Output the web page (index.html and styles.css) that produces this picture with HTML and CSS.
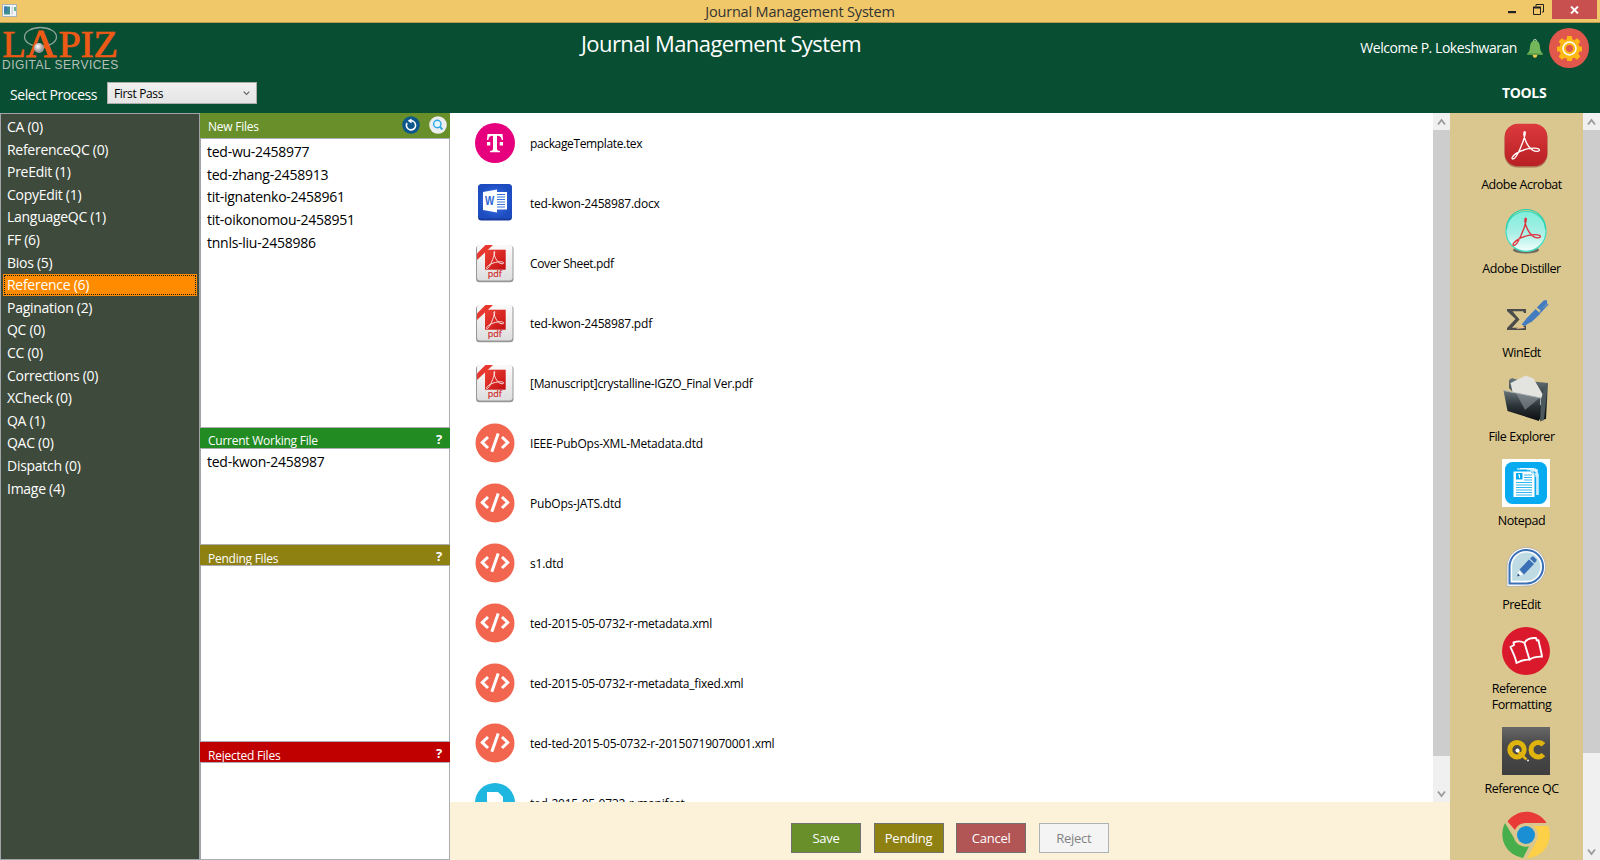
FILE: index.html
```html
<!DOCTYPE html>
<html lang="en">
<head>
<meta charset="utf-8">
<title>Journal Management System</title>
<link rel="stylesheet" href="styles.css">
</head>
<body>
<svg class="defs" width="0" height="0" aria-hidden="true">
  <defs>
    <linearGradient id="gRed" x1="0" y1="0" x2="0" y2="1"><stop offset="0" stop-color="#dc3a3c"/><stop offset="1" stop-color="#b81f24"/></linearGradient>
    <linearGradient id="gPdf" x1="0" y1="0" x2="1" y2="1"><stop offset="0" stop-color="#ee4136"/><stop offset="1" stop-color="#c30f12"/></linearGradient>
    <linearGradient id="gPaper" x1="0" y1="0" x2="0" y2="1"><stop offset="0" stop-color="#fafafa"/><stop offset="1" stop-color="#dedede"/></linearGradient>
    <radialGradient id="gWord"><stop offset="0" stop-color="#3f7cf0"/><stop offset="1" stop-color="#1d4cc0"/></radialGradient>
    <linearGradient id="gAqua" x1="0" y1="0" x2="0" y2="1"><stop offset="0" stop-color="#7feedb"/><stop offset=".55" stop-color="#a9f0e6"/><stop offset="1" stop-color="#f4fffd"/></linearGradient>
    <linearGradient id="gDark" x1="0" y1="0" x2="0" y2="1"><stop offset="0" stop-color="#68767b"/><stop offset=".5" stop-color="#2c3438"/><stop offset="1" stop-color="#0b0d0e"/></linearGradient>
    <linearGradient id="gQc" x1="0" y1="0" x2="0" y2="1"><stop offset="0" stop-color="#686868"/><stop offset=".35" stop-color="#4b4b4b"/><stop offset="1" stop-color="#3e3e3e"/></linearGradient>
    <radialGradient id="gBall" cx=".4" cy=".35"><stop offset="0" stop-color="#fff"/><stop offset="1" stop-color="#9b9b9b"/></radialGradient>
  </defs>
  <symbol id="acro" viewBox="0 0 30 30">
    <path d="M13.600 2.200c-1.200.2-.6 4.600.6 7.600 1.500 4 4.200 8.200 7.600 10.400 2.500 1.500 6 1.300 6.200-.2.300-1.600-4.200-2.400-8.800-1.700-5 .7-10.800 2.700-14.600 5.500-3 2.200-3.700 4.400-2.600 4.700 1.900.5 5-4.600 7.200-9.600 2.200-5 4.100-10.600 4.800-13.800.4-1.800.5-3-.4-2.900z" fill="none" stroke="currentColor" stroke-width="1.300" stroke-linejoin="round"/>
  </symbol>
  <symbol id="i-code" viewBox="0 0 40 40">
    <circle cx="20" cy="20" r="19.500" fill="#f26650"/>
    <path d="M13 14L7.300 19.500l5.700 5.500M27 14l5.700 5.500L27 25M23.200 10.500l-6.400 18.200" fill="none" stroke="#fff" stroke-width="3"/>
  </symbol>
  <symbol id="i-pdf" viewBox="0 0 40 40">
    <rect x="1" y="2.500" width="37.500" height="36.700" rx="3.500" fill="#969696"/>
    <rect x="2" y="2" width="35.500" height="35.500" rx="3" fill="url(#gPaper)"/>
    <rect x="10" y="6.700" width="20.700" height="20" fill="url(#gPdf)"/>
    <path d="M2 10.500L10.500 2H18L2 17z" fill="#e8372f"/>
    <use href="#acro" x="10.500" y="7" width="19.500" height="19.500" color="#fff"/>
    <text x="12.800" y="34" class="pdf-word">pdf</text>
  </symbol>
  <symbol id="i-gear" viewBox="0 0 24 24">
    <path d="M9.800 0h4.400l.5 3.200 1.900.8 2.700-1.900 3.100 3.100-1.900 2.600.8 2 3.100.5v4.200l-3.100.5-.8 2 1.900 2.600-3.100 3.100-2.700-1.900-1.900.8-.5 3H9.800l-.5-3-1.900-.8-2.700 1.900-3.100-3.100 1.900-2.600-.8-2-3.100-.5v-4.200l3.100-.5.800-2-1.900-2.600 3.100-3.100L7.400 4l1.900-.8z" fill="#fdb813"/>
    <circle cx="12" cy="12" r="6.200" fill="none" stroke="#fff" stroke-width="1.500"/>
    <circle cx="12" cy="12" r="3.300" fill="#e2574c"/>
  </symbol>
</svg>

<div class="window">
  <div class="titlebar">
    <svg class="app-icon" width="15" height="13" viewBox="0 0 15 13"><rect x=".5" y=".5" width="14" height="12" fill="#f4f6f8" stroke="#a9b3bd"/><rect x="2" y="2.500" width="6" height="8" fill="#3f8f8f"/><rect x="2" y="2.500" width="3" height="5" fill="#3b79b5"/><rect x="9.500" y="2.500" width="1.500" height="8" fill="#cfd6dc"/><rect x="12" y="3" width="2" height="4" fill="#6bb58c"/></svg>
    <div class="title">Journal Management System</div>
    <div class="win-buttons">
      <svg class="win-min" width="8" height="3"><rect width="8" height="2.200" fill="#222"/></svg>
      <svg class="win-max" width="11" height="11"><path d="M3 2.500V.5h7.500V8H9" fill="none" stroke="#222"/><path d="M.5 3.500h7v7h-7z" fill="none" stroke="#222"/><path d="M0 3.500h8" stroke="#222" stroke-width="2"/></svg>
      <div class="win-close"><svg width="9" height="8" viewBox="0 0 9 8"><path d="M1 .5l7 7M8 .5l-7 7" stroke="#fff" stroke-width="1.900"/></svg></div>
    </div>
  </div>

  <header class="header">
    <svg class="logo" width="122" height="48" viewBox="0 0 122 48">
      <ellipse cx="40.500" cy="14" rx="16" ry="9.500" fill="none" stroke="#8fa39a" stroke-width="1.300"/>
      <text x="2.500" y="33.500" class="logo-big" textLength="23" lengthAdjust="spacingAndGlyphs">L</text>
      <text x="26" y="33.500" class="logo-a" textLength="30" lengthAdjust="spacingAndGlyphs">A</text>
      <text x="58.500" y="33.500" class="logo-big" textLength="59" lengthAdjust="spacingAndGlyphs">PIZ</text>
      <circle cx="39" cy="25" r="5" fill="url(#gBall)"/>
      <text x="2" y="45.500" class="logo-small" textLength="116" lengthAdjust="spacing">DIGITAL SERVICES</text>
    </svg>
    <h1 class="app-title">Journal Management System</h1>
    <div class="user">
      <span class="welcome">Welcome P. Lokeshwaran</span>
      <svg class="bell" width="16" height="19" viewBox="0 0 16 19"><circle cx="8" cy="2" r="1.600" fill="none" stroke="#b9c2c8"/><circle cx="8" cy="16.500" r="2.200" fill="#efc84a"/><path d="M8 1.500c3 0 4.700 2.600 5 6.500.3 3.700.8 5 2.600 6.300v1.400H.4v-1.400C2.200 13 2.700 11.700 3 8c.3-3.900 2-6.500 5-6.500z" fill="#74b75a"/><path d="M.4 14.300h15.200v1.400H.4z" fill="#5b9c44"/></svg>
      <div class="gear"><svg width="25" height="25"><use href="#i-gear"/></svg></div>
    </div>
    <label class="process-label">Select Process</label>
    <div class="select"><span>First Pass</span><svg width="7" height="5" viewBox="0 0 7 5"><path d="M.7.7l2.800 2.800L6.300.7" fill="none" stroke="#666" stroke-width="1.200"/></svg></div>
    <div class="tools-title">TOOLS</div>
  </header>

  <main class="main">
    <ul class="stages">
      <li>CA (0)</li><li>ReferenceQC (0)</li><li>PreEdit (1)</li><li>CopyEdit (1)</li><li>LanguageQC (1)</li><li>FF (6)</li><li>Bios (5)</li><li class="selected">Reference (6)</li><li>Pagination (2)</li><li>QC (0)</li><li>CC (0)</li><li>Corrections (0)</li><li>XCheck (0)</li><li>QA (1)</li><li>QAC (0)</li><li>Dispatch (0)</li><li>Image (4)</li>
    </ul>

    <section class="queues">
      <div class="q-head new"><span>New Files</span>
        <svg class="q-refresh" width="18" height="18" viewBox="0 0 18 18"><circle cx="9" cy="9" r="8.800" fill="#0b578c"/><path d="M8 4.800A4.600 4.600 0 1 1 5 7" fill="none" stroke="#fff" stroke-width="1.600"/><path d="M9.500 2.500v5L5.700 4.700z" fill="#fff"/></svg>
        <svg width="18" height="18" viewBox="0 0 18 18"><circle cx="9" cy="9" r="8.800" fill="#eceef0"/><circle cx="8.300" cy="8" r="3.700" fill="#e4f6ff" stroke="#2ba6e0" stroke-width="1.400"/><path d="M10.800 10.800l2.600 2.600" stroke="#2ba6e0" stroke-width="2"/></svg>
      </div>
      <ul class="q-list q-new"><li>ted-wu-2458977</li><li>ted-zhang-2458913</li><li>tit-ignatenko-2458961</li><li>tit-oikonomou-2458951</li><li>tnnls-liu-2458986</li></ul>
      <div class="q-head current"><span>Current Working File</span><b>?</b></div>
      <ul class="q-list q-current"><li>ted-kwon-2458987</li></ul>
      <div class="q-head pending"><span>Pending Files</span><b>?</b></div>
      <ul class="q-list q-pending"></ul>
      <div class="q-head rejected"><span>Rejected Files</span><b>?</b></div>
      <ul class="q-list q-rejected"></ul>
    </section>

    <section class="work">
      <div class="files-pane">
        <ul class="files">
          <li class="plain"><svg width="40" height="40" viewBox="0 0 40 40"><circle cx="20" cy="20" r="20" fill="#e6007e"/><path d="M12.500 11h15l.5 6h-1.300c-.4-3-1.700-4.300-4.700-4.300v12.600c0 2 .7 2.500 3 2.700v1.200H15V28c2.300-.2 3-.7 3-2.700V12.700c-3 0-4.300 1.300-4.700 4.300H12zM12 19h3.300v3.400H12zM24.700 19H28v3.400h-3.300z" fill="#fff"/></svg><span>packageTemplate.tex</span></li>
          <li><svg width="40" height="40" viewBox="0 0 40 40"><rect x="3" y="1.500" width="34" height="36" rx="3.500" fill="#173a9c"/><rect x="3" y="1" width="34" height="34.500" rx="3.500" fill="url(#gWord)"/><path d="M20 9h12v17.500H20z" fill="#fff"/><path d="M22 11.500h8M22 14h8M22 16.500h8M22 19h8M22 21.500h8M22 24h8" stroke="#3b74dc" stroke-width="1.100"/><path d="M8 9l14-2.500v23L8 27z" fill="#fff"/><text x="10" y="21.800" class="word-w" textLength="9" lengthAdjust="spacingAndGlyphs">W</text></svg><span>ted-kwon-2458987.docx</span></li>
          <li class="plain"><svg width="40" height="40"><use href="#i-pdf"/></svg><span>Cover Sheet.pdf</span></li>
          <li><svg width="40" height="40"><use href="#i-pdf"/></svg><span>ted-kwon-2458987.pdf</span></li>
          <li class="long"><svg width="40" height="40"><use href="#i-pdf"/></svg><span>[Manuscript]crystalline-IGZO_Final Ver.pdf</span></li>
          <li><svg width="40" height="40"><use href="#i-code"/></svg><span>IEEE-PubOps-XML-Metadata.dtd</span></li>
          <li><svg width="40" height="40"><use href="#i-code"/></svg><span>PubOps-JATS.dtd</span></li>
          <li><svg width="40" height="40"><use href="#i-code"/></svg><span>s1.dtd</span></li>
          <li><svg width="40" height="40"><use href="#i-code"/></svg><span>ted-2015-05-0732-r-metadata.xml</span></li>
          <li><svg width="40" height="40"><use href="#i-code"/></svg><span>ted-2015-05-0732-r-metadata_fixed.xml</span></li>
          <li><svg width="40" height="40"><use href="#i-code"/></svg><span>ted-ted-2015-05-0732-r-20150719070001.xml</span></li>
          <li><svg width="40" height="40" viewBox="0 0 40 40"><circle cx="20" cy="20" r="20" fill="#1fb6e0"/><path d="M12 9h11l5 5v17H12z" fill="#fff"/></svg><span>ted-2015-05-0732-r-manifest</span></li>
        </ul>
        <div class="scroll"><svg width="17" height="17"><path d="M5 11.500l3.500-4.500 3.500 4.500" class="arrow"/></svg><div class="thumb thumb-files"></div><svg width="17" height="17"><path d="M5 6.500L8.500 11 12 6.500" class="arrow"/></svg></div>
      </div>
      <div class="actions"><button class="save">Save</button><button class="pend">Pending</button><button class="cancel">Cancel</button><button class="reject" disabled>Reject</button></div>
    </section>

    <aside class="tools">
      <div class="tool-list">
        <div class="tool"><svg width="48" height="48" viewBox="0 0 48 48"><rect x="2.500" y="2" width="43" height="42.500" rx="13" fill="#8c3a2c" opacity=".6"/><rect x="2.700" y="0.700" width="42.600" height="42.300" rx="13" fill="url(#gRed)"/><use href="#acro" x="8.500" y="6.500" width="31" height="31" color="#fff"/></svg><span>Adobe Acrobat</span></div>
        <div class="tool"><svg width="48" height="48" viewBox="0 -1 48 48"><ellipse cx="24" cy="42" rx="13" ry="3.500" fill="#555" opacity=".8"/><circle cx="24" cy="23.300" r="20" fill="url(#gAqua)" stroke="#45dcc0" stroke-width="1.300"/><path d="M4.500 21a19.500 19.500 0 0 1 39 0" fill="none" stroke="#25d2ae" stroke-width="1.200"/><use href="#acro" x="9.500" y="8" width="31" height="31" color="#e0313b"/></svg><span>Adobe Distiller</span></div>
        <div class="tool"><svg width="48" height="48" viewBox="0 0 48 48"><path d="M5 18h19v4h-2l-1-1.800H10.500l7 8.300-7.500 8.300H20l2-2.300h2V39H5v-2l8.500-9L5 20z" fill="#4c4c4c"/><path d="M14 38l6-4 3 3z" fill="#efc283"/><path d="M19.500 33.500l6-7 4 4-7 4.500z" fill="#447cc0"/><path d="M24.500 27.500l9-9.500 5 4.500-9.500 9z" fill="#447cc0"/><path d="M34.800 16.500L42 9.300h3v3l-6 7.500z" fill="#447cc0"/><path d="M38 21.500l8-8.500" stroke="#447cc0" stroke-width="1.500"/></svg><span>WinEdt</span></div>
        <div class="tool"><svg width="48" height="48" viewBox="0 0 48 48"><path d="M7 13V5l3-2 6 2 30 3-2 36-6 1z" fill="url(#gDark)"/><path d="M8.500 8L24 .5l7.500 3L44 25 30 38 12 24z" fill="#e3e3df"/><path d="M1.500 15.500l37 7.500-1.500 23L5.500 36z" fill="url(#gDark)"/><path d="M1.500 15.500l37 7.500" stroke="#aab3b6"/><path d="M14 18l23.500 5L23 35z" fill="#8f989b" opacity=".6"/><path d="M39 24l4.500-14 2-1.500L42 45l-4 1.500z" fill="#4d585d"/></svg><span>File Explorer</span></div>
        <div class="tool"><svg width="48" height="48" viewBox="0 0 48 48"><path d="M0 0h48v48H0z" fill="#fff"/><rect x="3" y="3" width="42" height="42" rx="7.500" fill="#08aaf0"/><path d="M15 10h16l5 5v21M18 9.500h14" fill="none" stroke="#fff" stroke-width="1.200"/><path d="M29 11l6 0v25M25 10.500h7" fill="none" stroke="#d5f1ff" stroke-width="1.600"/><path d="M11.500 12.500h17l4 4V38h-21z" fill="#fff"/><path d="M14 14h6.500v6.500H14z" fill="#08aaf0"/><path d="M16 15.500h2v3.500h-1v-2.500h-1z" fill="#fff"/><path d="M22 16h8M22 18.500h8M22 21h8M14 23.500h16M14 26h16M14 28.500h16M14 31h16M14 33.500h16M14 36h16" stroke="#32b6ef" stroke-width="1"/><path d="M28 12h3v3h3v3M31 10h3v3" fill="none" stroke="#fff"/></svg><span>Notepad</span></div>
        <div class="tool"><svg width="48" height="48" viewBox="0 1 48 48"><path d="M5 44.500V24A19.300 19.300 0 1 1 24 44z" fill="#fff" stroke="#aaa" stroke-width=".8"/><path d="M7.500 41.500V24A16.800 16.800 0 1 1 24 41.500z" fill="#bfdbe4" stroke="#3b70b7" stroke-width="2"/><path d="M9.500 39.500V24A14.800 14.800 0 1 1 24 39.500z" fill="none" stroke="#fff" stroke-width="1.300"/><path d="M15 34.500l2-6 4 4z" fill="#fff"/><path d="M15 34.500l1-3 2 2z" fill="#244d86"/><path d="M17.500 27.500l9.500-10 5 4.500-10 10.500z" fill="#3b70b7"/><path d="M28 16.500l2-2h1.500l3 3V19l-2 2z" fill="#3b70b7"/></svg><span>PreEdit</span></div>
        <div class="tool"><svg width="48" height="48" viewBox="0 0 48 48"><circle cx="24" cy="24" r="24" fill="#da1a2c"/><path d="M14.500 36c-1-6-4-11-6-16l3.500-2-.5-2.500c4-1.500 8-1.500 11 .5 1.500-3.500 6-5.200 11.500-5l.8 2.500 1.700-.3c.8 5.500 3 11 3.500 16.500-5-.2-9 .5-12.500 3-4-.4-8 .8-13 3.300zM22.500 16l5 16.500" fill="none" stroke="#fff" stroke-width="1.900" stroke-linejoin="round"/></svg><span>Reference<br>Formatting</span></div>
        <div class="tool"><svg width="48" height="48" viewBox="0 0 48 48"><path d="M0 0h48v48H0z" fill="url(#gQc)"/><circle cx="15" cy="22.700" r="7.200" fill="none" stroke="#dfb40e" stroke-width="5"/><path d="M41.500 17.800a7.200 7.200 0 1 0 0 9.800" fill="none" stroke="#dfb40e" stroke-width="5"/><path d="M13 22l11 10" stroke="#444" stroke-width="1.600"/><path d="M16 24.500l8.500 8" stroke="#dfb40e" stroke-width="2.500"/><circle cx="15.500" cy="23.500" r="2" fill="#fff"/><circle cx="26" cy="33.500" r=".9" fill="#fff"/></svg><span>Reference QC</span></div>
        <div class="tool"><svg width="48" height="48" viewBox="0 1 48 48"><path d="M5.500 11.500A23.500 23.500 0 0 1 44.500 13H24.500A12 12 0 0 0 13 20z" fill="#e83a36"/><path d="M3 13A24 24 0 0 0 21 48l6-11.500C18 37.500 13.500 33 12 28z" fill="#46ae4a"/><path d="M31.500 16H46.300A24 24 0 0 1 25 48.500L34.500 31c3-6 .5-12-3-15z" fill="#fdd048"/><circle cx="24" cy="25" r="9" fill="#1a8fd3"/></svg></div>
      </div>
      <div class="scroll"><svg width="17" height="17"><path d="M5 11.500l3.500-4.500 3.500 4.500" class="arrow"/></svg><div class="thumb thumb-tools"></div><svg width="17" height="17"><path d="M5 6.500L8.500 11 12 6.500" class="arrow"/></svg></div>
    </aside>
  </main>
</div>
</body>
</html>
```

FILE: styles.css
```css
* { box-sizing: border-box; }
body { margin: 0; font-family: "Open Sans", "Noto Sans", sans-serif; font-size: 12px; letter-spacing: -0.35px; color: #000; }
ul { list-style: none; margin: 0; padding: 0; }
svg { display: block; flex: none; }
.defs { position: absolute; }
.window { width: 1600px; height: 860px; overflow: hidden; display: flex; flex-direction: column; }

.titlebar { height: 23px; flex: none; background: #f0c869; border-bottom: 1px solid #b99a50; display: grid; grid-template-columns: 1fr auto 1fr; align-items: start; }
.app-icon { margin: 4px 0 0 2px; }
.title { font-size: 14.5px; line-height: 23px; color: #333; letter-spacing: -0.18px; white-space: nowrap; }
.win-buttons { display: flex; justify-content: flex-end; padding-right: 3px; }
.win-min { margin: 11px 17px 0 0; }
.win-max { margin: 4px 8px 0 0; }
.win-close { width: 45px; height: 19px; background: #c8504f; display: flex; align-items: center; justify-content: center; }

.header { height: 90px; flex: none; background: #074e33; color: #fff; display: grid; grid-template-columns: 107px 343px 1fr 250px; grid-template-rows: 50px 40px; }
.logo { grid-column: 1 / 3; grid-row: 1; overflow: visible; }
.app-title { grid-column: 3; grid-row: 1; margin: 0 0 0 131px; font-weight: 400; font-size: 22px; line-height: 40px; letter-spacing: -0.58px; white-space: nowrap; }
.user { grid-column: 4; grid-row: 1; display: flex; justify-content: flex-end; padding: 5px 11px 0 0; height: 45px; align-items: center; }
.welcome { font-size: 14px; letter-spacing: -0.45px; white-space: nowrap; margin-top: -2px; }
.bell { margin: 0 6px 0 10px; }
.gear { width: 40px; height: 40px; border-radius: 50%; background: #e2574c; display: flex; align-items: center; justify-content: center; }
.process-label { grid-column: 1; grid-row: 2; padding-left: 10px; font-size: 14px; line-height: 43px; letter-spacing: -0.4px; white-space: nowrap; }
.select { grid-column: 2; grid-row: 2; width: 150px; height: 22px; margin-top: 9px; padding: 0 6px; display: flex; align-items: center; justify-content: space-between; background: linear-gradient(#f0f0f0, #e5e5e5); border: 1px solid #acacac; color: #000; }
.tools-title { grid-column: 4; grid-row: 2; padding-left: 152px; font-size: 14px; line-height: 40px; font-weight: 700; }

.main { flex: 1; display: grid; grid-template-columns: 200px 250px 1000px 150px; min-height: 0; }
.stages { background: #3e4a3c; border: 1px solid #a0a4a8; padding: 2px; color: #fff; font-size: 14px; letter-spacing: -0.28px; }
.stages li { height: 21.600px; margin-bottom: 1px; padding-left: 4px; line-height: 21px; white-space: nowrap; }
.stages .selected { background: #ff8c00; outline: 1px dotted #222; outline-offset: -2px; }

.queues { display: flex; flex-direction: column; }
.q-head { height: 20px; flex: none; padding: 0 8px; display: flex; justify-content: space-between; color: #fff; line-height: 26px; letter-spacing: -0.25px; overflow: hidden; }
.q-head b { font-size: 13px; line-height: 22px; }
.q-head.new { height: 25px; padding: 3px 3.500px 0 8px; background: #688f2a; line-height: 22px; }
.q-refresh { margin: 0 9px 0 auto; }
.current { background: #228b22; }
.q-head.pending, .q-head.rejected { line-height: 28px; }
.q-head.pending b { line-height: 23px; }
.q-head.rejected b { line-height: 22px; }
.pending { background: #8f8012; }
.rejected { background: #c00000; }
.q-list { background: #fff; border: 1px solid #abadb3; border-left-color: #a0a4a8; padding: 2px 6px; font-size: 14px; letter-spacing: -0.26px; }
.q-list li { line-height: 22.700px; white-space: nowrap; }
.q-new { height: 290px; }
.q-current { height: 97px; }
.q-pending { height: 177px; }
.q-rejected { height: 98px; }

.work { display: flex; flex-direction: column; min-height: 0; }
.files-pane { height: 689px; display: flex; background: #fff; overflow: hidden; }
.files { flex: 1; padding-left: 25px; }
.files li { height: 60px; display: flex; align-items: center; gap: 15px; white-space: nowrap; letter-spacing: -0.21px; }
.files .plain { letter-spacing: -0.36px; }
.files .long { letter-spacing: -0.3px; }
.pdf-word { font: 9px "Open Sans", sans-serif; fill: #cf2a28; stroke: #cf2a28; stroke-width: 0.2px; letter-spacing: 0; }
.word-w { font: bold 12px "Liberation Sans", sans-serif; fill: #2e66d6; }
.actions { height: 58px; background: #fbf2d9; display: flex; padding: 21px 0 0 341px; gap: 12.600px; }
.actions button { width: 70px; height: 30px; padding: 0; border: 1px solid #707070; color: #fff; font: 13px "Open Sans", sans-serif; letter-spacing: -0.25px; }
.actions .save { background: #688f2a; }
.actions .pend { background: #8f8012; }
.actions .cancel { background: #b15555; }
.actions .reject { background: #f4f4f4; border-color: #adb2b5; color: #838383; }

.scroll { width: 17px; flex: none; background: #f0f0f0; display: flex; flex-direction: column; }
.scroll svg:last-child { margin-top: auto; }
.thumb { background: #cdcdcd; }
.thumb-files { height: 626px; }
.thumb-tools { height: 623px; }
.arrow { fill: none; stroke: #9a9a9a; stroke-width: 1.800; }

.tools { display: flex; background: #dac78f; overflow: hidden; min-height: 0; height: 747px; }
.tool-list { width: 133px; padding: 10px 0 0 10px; display: flex; flex-direction: column; align-items: center; }
.tool { flex: none; display: flex; flex-direction: column; align-items: center; padding-bottom: 14px; font-size: 12.500px; line-height: 16px; letter-spacing: -0.45px; }
.tool svg { margin: 0 0 6px 9px; }

.logo-big { font: 37px "Liberation Serif", serif; fill: #ee5a16; stroke: #ee5a16; stroke-width: 0.7px; }
.logo-a { font: 39px "Liberation Serif", serif; fill: #ee5a16; stroke: #ee5a16; stroke-width: 1px; }
.logo-small { font: 12px "Liberation Sans", sans-serif; fill: #b7c0b8; }
```
